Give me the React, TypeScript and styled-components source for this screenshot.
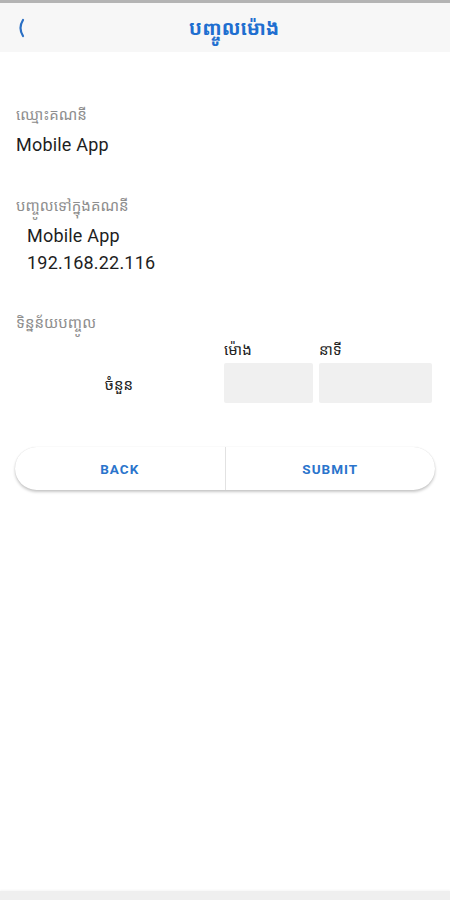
import React from "react";
import styled, { createGlobalStyle } from "styled-components";

const Global = createGlobalStyle`
  html, body { margin: 0; padding: 0; background: #ffffff; }
  body { font-family: Roboto, "Noto Sans Khmer", "Khmer OS", "Noto Sans", sans-serif; }
  #root { min-height: 900px; }
`;

const Screen = styled.div`
  width: 450px;
  height: 900px;
  display: flex;
  flex-direction: column;
  background: #ffffff;
  border-top: 3px solid #b4b4b4;
  box-sizing: border-box;
`;

const Header = styled.header`
  height: 49px;
  background: #f7f7f7;
  display: grid;
  grid-template-columns: 60px 1fr 60px;
  align-items: center;
`;

const BackIcon = styled.button`
  border: 0;
  background: transparent;
  padding: 0 0 0 16px;
  display: flex;
  align-items: center;
  color: #2a6fc4;
  cursor: pointer;
`;

const Title = styled.h1`
  margin: 0;
  text-align: center;
  padding-left: 18px;
  font-size: 19.5px;
  font-weight: 700;
  color: #1f6fd0;
`;

const Body = styled.main`
  flex: 1;
  display: flex;
  flex-direction: column;
  padding: 51px 16px 0 16px;
`;

const Section = styled.section<{ $gap?: number }>`
  display: flex;
  flex-direction: column;
  margin-bottom: ${(p) => p.$gap ?? 0}px;
`;

const Label = styled.div`
  font-size: 15px;
  color: #8e8e8e;
  line-height: 24px;
  margin-bottom: 4px;
`;

const Value = styled.div<{ $indent?: number }>`
  font-size: 18px;
  letter-spacing: 0.2px;
  color: #1e1e1e;
  line-height: 27px;
  padding-left: ${(p) => p.$indent ?? 0}px;
`;

const InputGrid = styled.div`
  display: grid;
  grid-template-columns: 210px 89px 113px;
  column-gap: 6px;
  row-gap: 3px;
  margin-left: -8px;
  margin-top: 1px;
`;

const ColHead = styled.div`
  font-size: 15px;
  color: #222;
  line-height: 20px;
`;

const RowLabel = styled.div`
  font-size: 15px;
  color: #222;
  display: flex;
  align-items: center;
  justify-content: center;
  padding-left: 12px;
  padding-top: 2px;
`;

const Field = styled.div`
  height: 40px;
  background: #f0f0f0;
  border-radius: 2px;
`;

const ButtonBar = styled.div`
  margin: 44px -1px 0 -1px;
  height: 43px;
  border-radius: 21.5px;
  background: #ffffff;
  box-shadow: 0 2px 3px rgba(0, 0, 0, 0.22), 0 0 1px rgba(0, 0, 0, 0.15);
  display: grid;
  grid-template-columns: 1fr 1px 1fr;
  align-items: stretch;
  overflow: hidden;
`;

const Divider = styled.div`
  background: #e2e2e2;
`;

const Action = styled.button`
  border: 0;
  background: transparent;
  font-family: Roboto, "Liberation Sans", sans-serif;
  font-size: 13.5px;
  font-weight: 700;
  letter-spacing: 1px;
  color: #2a74cc;
  cursor: pointer;
`;

const Footer = styled.div`
  height: 9px;
  background: #efefef;
  box-shadow: 0 -1px 2px rgba(0, 0, 0, 0.04);
`;

export default function App() {
  return (
    <>
      <Global />
      <Screen>
        <Header>
          <BackIcon aria-label="back">
            <svg width="10" height="20" viewBox="0 0 10 20">
              <path d="M7 2 Q2 10 7 18" fill="none" stroke="currentColor" strokeWidth="2.2" strokeLinecap="round" />
            </svg>
          </BackIcon>
          <Title>បញ្ចូលម៉ោង</Title>
          <span />
        </Header>
        <Body>
          <Section $gap={36}>
            <Label>ឈ្មោះគណនី</Label>
            <Value>Mobile App</Value>
          </Section>
          <Section $gap={35}>
            <Label>បញ្ចូលទៅក្នុងគណនី</Label>
            <Value $indent={11}>Mobile App</Value>
            <Value $indent={11}>192.168.22.116</Value>
          </Section>
          <Section>
            <Label>ទិន្នន័យបញ្ចូល</Label>
            <InputGrid>
              <span />
              <ColHead>ម៉ោង</ColHead>
              <ColHead>នាទី</ColHead>
              <RowLabel>ចំនួន</RowLabel>
              <Field />
              <Field />
            </InputGrid>
          </Section>
          <ButtonBar>
            <Action>BACK</Action>
            <Divider />
            <Action>SUBMIT</Action>
          </ButtonBar>
        </Body>
        <Footer />
      </Screen>
    </>
  );
}
